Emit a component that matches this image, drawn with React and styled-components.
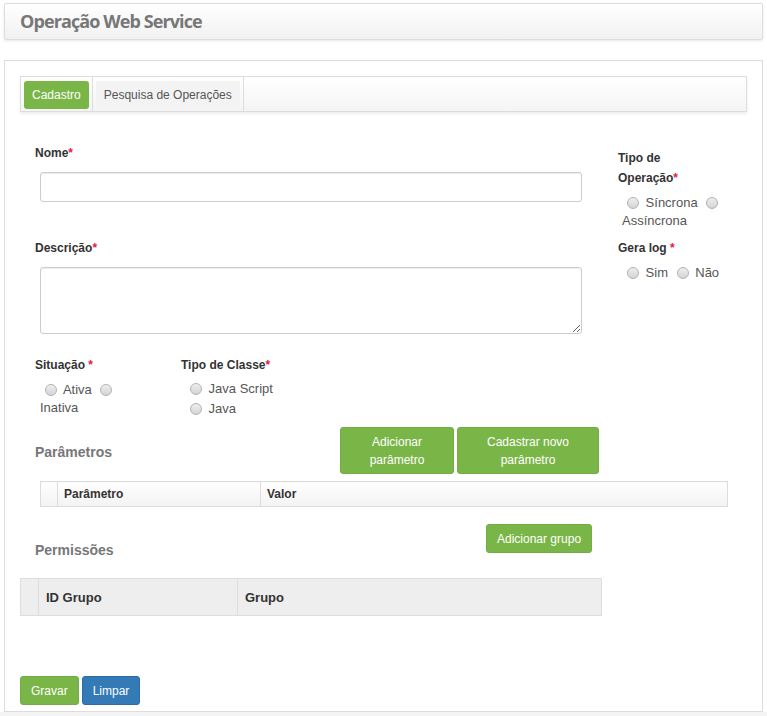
import styled, { createGlobalStyle } from "styled-components";

const GlobalStyle = createGlobalStyle`
  html, body {
    margin: 0;
    padding: 0;
    background: #fff;
  }
  body {
    font-family: "Liberation Sans", Arial, sans-serif;
    font-size: 12px;
    color: #333;
  }
  * {
    box-sizing: border-box;
  }
`;

const Page = styled.div`
  min-height: 100vh;
  display: flex;
  flex-direction: column;
`;

const Header = styled.header`
  margin: 3px 4px 0;
  height: 37px;
  padding: 0 15px 2px;
  display: flex;
  align-items: center;
  border: 1px solid #ddd;
  border-radius: 2px;
  background: linear-gradient(#fff, #f1f1f1);
  box-shadow: 0 1px 3px rgba(0, 0, 0, 0.1);
`;

const Title = styled.h1`
  margin: 0;
  font-family: "Open Sans", "Liberation Sans", sans-serif;
  font-weight: 700;
  font-size: 18px;
  letter-spacing: -0.9px;
  color: #777;
`;

const Panel = styled.main`
  margin: 20px 4px 0;
  border: 1px solid #ddd;
  padding: 15px 15px 6px;
`;

const BottomStrip = styled.div`
  flex: 1;
  background: #f4f4f4;
`;

const TabBar = styled.nav`
  display: flex;
  height: 36px;
  border: 1px solid #ddd;
  background: linear-gradient(#fff, #f4f4f4);
  box-shadow: 0 2px 3px rgba(0, 0, 0, 0.07);
`;

const TabItem = styled.div`
  padding: 4px 3px 2px;
  border-right: 1px solid #ddd;
`;

const TabLink = styled.a`
  display: block;
  height: 28px;
  line-height: 28px;
  padding: 0 8px;
  font-size: 12px;
  border-radius: ${(p) => (p.$active ? "3px" : "0")};
  background: ${(p) => (p.$active ? "#7ab547" : "#f3f3f3")};
  color: ${(p) => (p.$active ? "#fff" : "#555")};
  cursor: pointer;
`;

const TopGrid = styled.div`
  display: grid;
  grid-template-columns: 598px 1fr;
  margin-top: 31px;
`;

const LeftCol = styled.div`
  padding-left: 15px;
`;

const RightCol = styled.div`
  padding-top: 4px;
`;

const Label = styled.div`
  font-weight: 700;
  font-size: 12px;
  line-height: ${(p) => p.$lh || 16}px;
  color: #333;
  margin-top: ${(p) => p.$mt || 0}px;
`;

const Req = styled.span`
  color: #e8173a;
`;

const TextInput = styled.input`
  display: block;
  margin: 11px 0 0 5px;
  width: 542px;
  height: 30px;
  border: 1px solid #ccc;
  border-radius: 3px;
  box-shadow: inset 0 1px 1px rgba(0, 0, 0, 0.075);
  font: inherit;
`;

const TextArea = styled.textarea`
  display: block;
  margin: 11px 0 0 5px;
  width: 542px;
  height: 67px;
  border: 1px solid #ccc;
  border-radius: 3px;
  box-shadow: inset 0 1px 1px rgba(0, 0, 0, 0.075);
  resize: vertical;
  font: inherit;
`;

const ChoiceRow = styled.div`
  display: flex;
  margin-top: 23px;
`;

const ChoiceBlock = styled.div`
  width: ${(p) => (p.$w ? `${p.$w}px` : "auto")};
`;

const RadioGroup = styled.div`
  width: ${(p) => (p.$w ? `${p.$w}px` : "auto")};
  margin-top: ${(p) => p.$mt || 0}px;
  padding-left: ${(p) => p.$pl || 0}px;
  font-size: 13px;
  line-height: ${(p) => p.$lh || 18}px;
  color: #555;
`;

const RadioLine = styled.div`
  white-space: nowrap;
`;

const Radio = styled.span`
  display: inline-block;
  width: 12px;
  height: 12px;
  margin: 0 3px 0 5px;
  border-radius: 50%;
  border: 1px solid #b3b3b3;
  background: linear-gradient(#eeeeee, #d4d4d4);
  vertical-align: -2px;
`;

const SectionRow = styled.div`
  display: flex;
  align-items: ${(p) => p.$align || "center"};
  margin-top: ${(p) => p.$mt || 0}px;
  padding-left: 15px;
`;

const SectionTitle = styled.h3`
  margin: ${(p) => p.$mt || 0}px 0 0;
  width: ${(p) => p.$w}px;
  flex-shrink: 0;
  font-size: 14px;
  line-height: 16px;
  font-weight: 700;
  color: #777;
`;

const ButtonGroup = styled.div`
  display: flex;
  gap: 3px;
  margin-top: ${(p) => p.$mt || 0}px;
`;

const Button = styled.button`
  width: ${(p) => (p.$w ? `${p.$w}px` : "auto")};
  height: ${(p) => (p.$h ? `${p.$h}px` : "29px")};
  padding: ${(p) => (p.$h ? "4px 6px" : "0 10px")};
  border: 1px solid ${(p) => (p.$blue ? "#2e6da4" : "#74ad43")};
  border-radius: 3px;
  background: ${(p) => (p.$blue ? "#337ab7" : "#7ab547")};
  color: #fff;
  font-family: "Liberation Sans", Arial, sans-serif;
  font-size: 12px;
  line-height: 18px;
  text-align: center;
  white-space: ${(p) => (p.$h ? "normal" : "nowrap")};
  cursor: pointer;
`;

const Table = styled.table`
  margin: ${(p) => p.$mt}px 0 0 ${(p) => p.$ml}px;
  width: ${(p) => p.$w}px;
  border-collapse: collapse;
  border: 1px solid #ddd;
  table-layout: fixed;
`;

const Th = styled.th`
  width: ${(p) => (p.$w ? `${p.$w}px` : "auto")};
  height: ${(p) => p.$h}px;
  padding: 0 0 0 ${(p) => p.$pad}px;
  border-left: 1px solid #ddd;
  text-align: left;
  font-weight: 700;
  font-size: ${(p) => p.$fs}px;
  color: #333;
  background: ${(p) => (p.$flat ? "#eee" : "linear-gradient(#fff, #f3f3f3)")};
`;

export default function App() {
  return (
    <Page>
      <GlobalStyle />
      <Header>
        <Title>Operação Web Service</Title>
      </Header>
      <Panel>
        <TabBar>
          <TabItem>
            <TabLink $active>Cadastro</TabLink>
          </TabItem>
          <TabItem>
            <TabLink>Pesquisa de Operações</TabLink>
          </TabItem>
        </TabBar>

        <TopGrid>
          <LeftCol>
            <Label $mt={2}>
              Nome<Req>*</Req>
            </Label>
            <TextInput type="text" />
            <Label $mt={38}>
              Descrição<Req>*</Req>
            </Label>
            <TextArea />
            <ChoiceRow>
              <ChoiceBlock $w={146}>
                <Label>
                  Situação <Req>*</Req>
                </Label>
                <RadioGroup $w={105} $pl={5} $mt={8}>
                  <Radio /> Ativa <Radio /> Inativa
                </RadioGroup>
              </ChoiceBlock>
              <ChoiceBlock>
                <Label>
                  Tipo de Classe<Req>*</Req>
                </Label>
                <RadioGroup $pl={4} $mt={6} $lh={20}>
                  <RadioLine>
                    <Radio /> Java Script
                  </RadioLine>
                  <RadioLine>
                    <Radio /> Java
                  </RadioLine>
                </RadioGroup>
              </ChoiceBlock>
            </ChoiceRow>
          </LeftCol>

          <RightCol>
            <Label $lh={20} $mt={1}>
              Tipo de
              <br />
              Operação<Req>*</Req>
            </Label>
            <RadioGroup $pl={4} $mt={6}>
              <Radio /> Síncrona <Radio /> Assíncrona
            </RadioGroup>
            <Label $lh={20} $mt={8}>
              Gera log <Req>*</Req>
            </Label>
            <RadioGroup $pl={4} $mt={6}>
              <Radio /> Sim <Radio /> Não
            </RadioGroup>
          </RightCol>
        </TopGrid>

        <SectionRow $mt={8}>
          <SectionTitle $w={305} $mt={2}>
            Parâmetros
          </SectionTitle>
          <ButtonGroup>
            <Button $w={114} $h={47}>
              Adicionar parâmetro
            </Button>
            <Button $w={142} $h={47}>
              Cadastrar novo parâmetro
            </Button>
          </ButtonGroup>
        </SectionRow>

        <Table $mt={7} $ml={20} $w={688}>
          <thead>
            <tr>
              <Th $w={17} $h={25} $pad={0} $fs={12} />
              <Th $w={203} $h={25} $pad={6} $fs={12}>
                Parâmetro
              </Th>
              <Th $h={25} $pad={6} $fs={12}>
                Valor
              </Th>
            </tr>
          </thead>
        </Table>

        <SectionRow $mt={17} $align="flex-start">
          <SectionTitle $w={451} $mt={18}>
            Permissões
          </SectionTitle>
          <Button $w={106}>Adicionar grupo</Button>
        </SectionRow>

        <Table $mt={20} $ml={0} $w={582}>
          <thead>
            <tr>
              <Th $w={18} $h={37} $pad={0} $fs={13} $flat />
              <Th $w={199} $h={37} $pad={7} $fs={13} $flat>
                ID Grupo
              </Th>
              <Th $h={37} $pad={7} $fs={13} $flat>
                Grupo
              </Th>
            </tr>
          </thead>
        </Table>

        <ButtonGroup $mt={60}>
          <Button>Gravar</Button>
          <Button $blue>Limpar</Button>
        </ButtonGroup>
      </Panel>
      <BottomStrip />
    </Page>
  );
}
